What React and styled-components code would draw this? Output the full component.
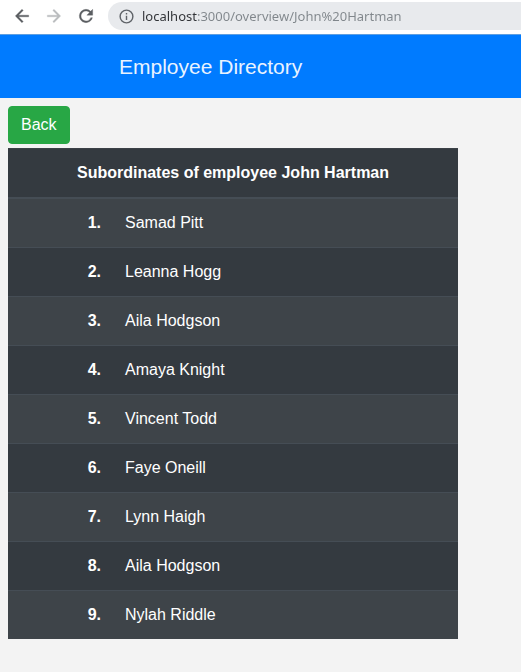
import React from "react";
import styled, { createGlobalStyle } from "styled-components";

const GlobalStyle = createGlobalStyle`
  *, *::before, *::after { box-sizing: border-box; }
  body {
    margin: 0;
    background: #f3f3f3;
    color: #212529;
    font-family: "Liberation Sans", Arial, sans-serif;
    font-size: 16px;
    line-height: 24px;
  }
`;

const BrowserBar = styled.div`
  display: flex;
  align-items: center;
  height: 35px;
  padding: 0 0 2px 12px;
  background: #ffffff;
  border-bottom: 1px solid #5f9fe0;
`;

const NavButton = styled.button`
  flex: none;
  display: flex;
  width: 32px;
  padding: 0;
  border: 0;
  background: none;
  color: ${(p) => (p.disabled ? "#babcbe" : "#5a5d61")};
`;

const Icon = styled.svg`
  width: 20px;
  height: 20px;
  fill: currentColor;
  stroke: currentColor;
  stroke-width: 0.4;
`;

const AddressBar = styled.label`
  flex: 1;
  min-width: 0;
  display: flex;
  align-items: center;
  gap: 7px;
  height: 28px;
  padding-left: 10px;
  border-radius: 14px 0 0 14px;
  background: #e8eaed;
`;

const InfoIcon = styled.svg`
  flex: none;
  width: 17px;
  height: 17px;
  fill: #5f6368;
`;

/* The host is drawn dark and the rest of the address grey. */
const AddressInput = styled.input`
  flex: 1;
  min-width: 0;
  height: 20px;
  padding: 0;
  border: 0;
  outline: 0;
  font-family: "Noto Sans", "Open Sans", sans-serif;
  font-size: 13px;
  line-height: 20px;
  color: transparent;
  caret-color: #202124;
  background: linear-gradient(to right, #303236 56px, #80868b 56px);
  background-clip: text;
  -webkit-background-clip: text;
`;

const Header = styled.header`
  padding: 16px 24px 15px 119px;
  background: #007bff;
`;

const Title = styled.h1`
  margin: 0;
  color: #e9f3ff;
  font-size: 21px;
  font-weight: 400;
  line-height: 32px;
`;

const Main = styled.main`
  display: flex;
  flex-direction: column;
  align-items: flex-start;
  gap: 4px;
  padding: 8px;
`;

const BackButton = styled.button`
  padding: 6px 12px;
  border: 1px solid #28a745;
  border-radius: 4px;
  background: #28a745;
  color: #ffffff;
  font: inherit;
  cursor: pointer;
`;

const Table = styled.table`
  width: 100%;
  max-width: 450px;
  border-spacing: 0;
  background: #343a40;
  color: #ffffff;
`;

const HeadCell = styled.th`
  padding: 12px;
  border-top: 1px solid #3b4147;
  border-bottom: 2px solid #454d55;
  text-align: center;
`;

const Row = styled.tr`
  &:nth-child(odd) {
    background: #3e4449;
  }
  & + & > * {
    border-top: 1px solid #454d55;
  }
`;

const NumberCell = styled.th`
  width: 105px;
  padding: 12px;
  text-align: right;
`;

const NameCell = styled.td`
  padding: 12px;
`;

const employees = [
  "Samad Pitt",
  "Leanna Hogg",
  "Aila Hodgson",
  "Amaya Knight",
  "Vincent Todd",
  "Faye Oneill",
  "Lynn Haigh",
  "Aila Hodgson",
  "Nylah Riddle",
];

export default function App() {
  return (
    <>
      <GlobalStyle />
      <BrowserBar>
        <NavButton type="button" aria-label="Go back">
          <Icon viewBox="0 0 24 24">
            <path d="M20 11H7.83l5.59-5.59L12 4l-8 8 8 8 1.41-1.41L7.83 13H20v-2z" />
          </Icon>
        </NavButton>
        <NavButton type="button" aria-label="Go forward" disabled>
          <Icon viewBox="0 0 24 24">
            <path d="M12 4l-1.41 1.41L16.17 11H4v2h12.17l-5.58 5.59L12 20l8-8z" />
          </Icon>
        </NavButton>
        <NavButton type="button" aria-label="Reload">
          <Icon viewBox="0 0 24 24">
            <path d="M17.65 6.35A7.958 7.958 0 0 0 12 4a8 8 0 1 0 7.73 10h-2.08A5.99 5.99 0 0 1 12 18a6 6 0 1 1 0-12c1.66 0 3.14.69 4.22 1.78L13 11h7V4l-2.35 2.35z" />
          </Icon>
        </NavButton>
        <AddressBar>
          <InfoIcon viewBox="0 0 24 24" aria-hidden="true">
            <path d="M11 7h2v2h-2zm0 4h2v6h-2zm1-9a10 10 0 1 0 0 20 10 10 0 0 0 0-20zm0 18a8 8 0 1 1 0-16 8 8 0 0 1 0 16z" />
          </InfoIcon>
          <AddressInput
            type="text"
            aria-label="Address"
            spellCheck={false}
            defaultValue="localhost:3000/overview/John%20Hartman"
          />
        </AddressBar>
      </BrowserBar>
      <Header>
        <Title>Employee Directory</Title>
      </Header>
      <Main>
        <BackButton type="button">Back</BackButton>
        <Table>
          <thead>
            <tr>
              <HeadCell colSpan={2}>Subordinates of employee John Hartman</HeadCell>
            </tr>
          </thead>
          <tbody>
            {employees.map((name, i) => (
              <Row key={i}>
                <NumberCell scope="row">{i + 1}.</NumberCell>
                <NameCell>{name}</NameCell>
              </Row>
            ))}
          </tbody>
        </Table>
      </Main>
    </>
  );
}
